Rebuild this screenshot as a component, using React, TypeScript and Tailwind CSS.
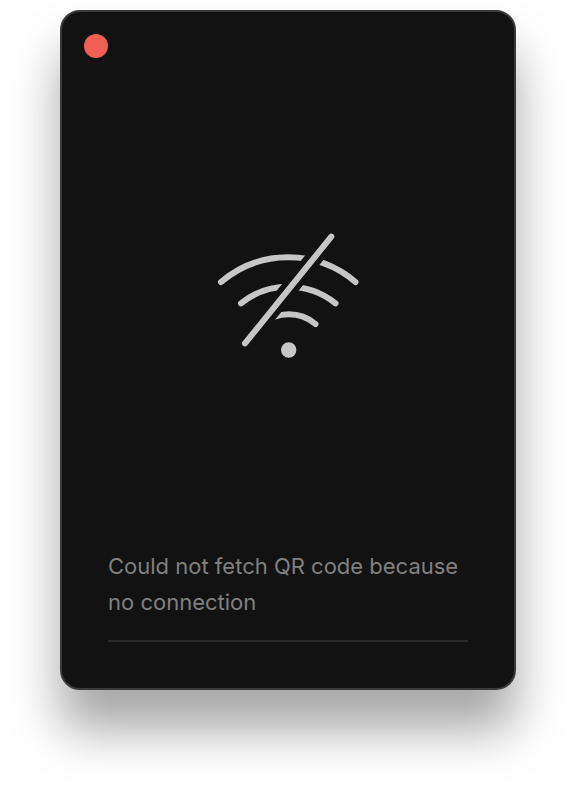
import React from 'react';

const WifiOff = () => (
  <svg width="150" height="130" viewBox="213 230 150 130" fill="none" stroke="#c6c6c6" strokeLinecap="round" strokeWidth="6">
    <path d="M221 282 A104 104 0 0 1 355.5 282" />
    <path d="M241 303.3 A75.7 75.7 0 0 1 335.5 303.3" />
    <path d="M262 324 A41.9 41.9 0 0 1 315.5 324" />
    <path d="M331.3 236.7 L245 343.3" stroke="#121212" strokeWidth="17" strokeLinecap="butt" />
    <path d="M331.3 236.7 L245 343.3" />
    <circle cx="288.7" cy="350" r="7.7" fill="#c6c6c6" stroke="none" />
  </svg>
);

export default function App() {
  return (
    <div className="h-[800px] w-[576px] overflow-hidden bg-white pt-[10px] pl-[60px]" style={{ fontFamily: 'Inter, sans-serif' }}>
      <div className="flex h-[680px] w-[456px] flex-col rounded-[20px] border-2 border-[#3a3a3a] bg-[#121212] shadow-[0_40px_50px_rgba(0,0,0,0.35)]">
        <div className="mt-[22px] ml-[22px] h-6 w-6 rounded-full bg-[#ef5f54]" />
        <div className="mt-[172px] flex justify-center">
          <WifiOff />
        </div>
        <div className="mt-[188px] px-[46px]">
          <p className="text-[22px] leading-9 text-[#808080]">Could not fetch QR code because no connection</p>
          <div className="mt-5 h-0.5 bg-[#2a2a2a]" />
        </div>
      </div>
    </div>
  );
}
